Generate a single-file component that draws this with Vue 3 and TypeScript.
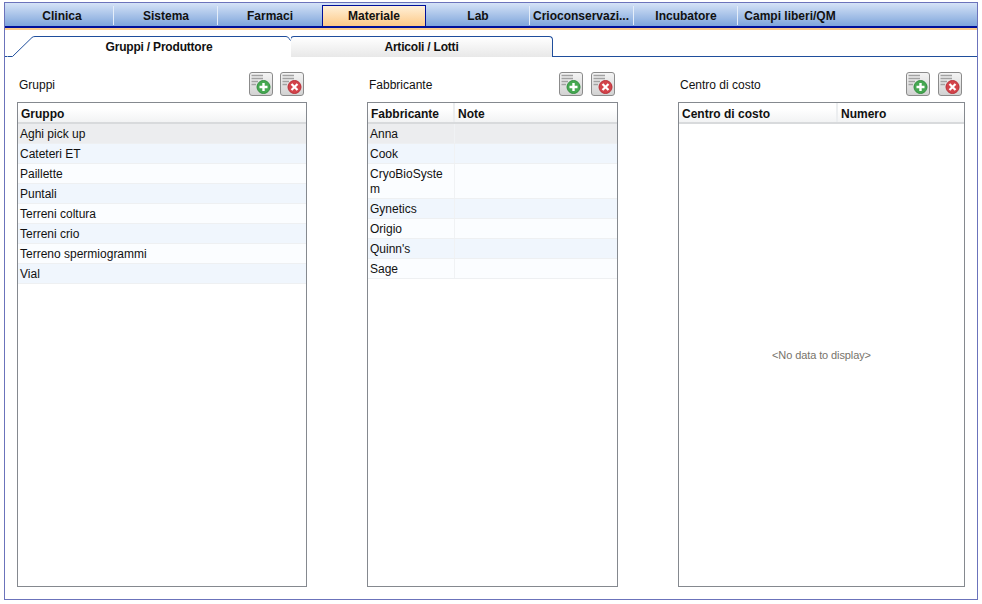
<template>
  <div class="frame">
    <nav class="main-tabs">
      <div
        v-for="tab in mainTabs"
        :key="tab"
        class="main-tab"
        :class="{ 'is-active': tab === 'Materiale', 'is-tight': tab === 'Crioconservazi...' }"
      >
        {{ tab }}
      </div>
    </nav>

    <div class="sub-tabs">
      <div class="sub-tab is-active">
        <svg class="sub-tab__shape" width="284" height="21" viewBox="0 0 284 21" aria-hidden="true">
          <path d="M0.5 20.5H5.5L25 1.5Q26 0.5 28 0.5H279Q281 0.5 282 2.5L283.5 4.5" fill="#fff" stroke="#1f4e9c" />
        </svg>
        <span>Gruppi / Produttore</span>
      </div>
      <div class="sub-tab"><span>Articoli / Lotti</span></div>
    </div>

    <div class="columns">
      <section v-for="col in columns" :key="col.title" class="column" :class="col.cls">
        <header class="column__head">
          <span class="column__title">{{ col.title }}</span>
          <div class="column__tools">
            <button class="tool" type="button">
              <svg width="22" height="22" viewBox="0 0 22 22" aria-hidden="true">
                <path d="M1.5 2.5H13M1.5 5.5H13M1.5 8.5H8M1.5 11.5H6" stroke="#a2a2a2" stroke-width="1.6" />
                <circle cx="13.5" cy="14" r="6.5" fill="#45a851" stroke="#338f40" />
                <path d="M9.5 14H17.5M13.5 10V18" stroke="#fff" stroke-width="2.4" />
              </svg>
            </button>
            <button class="tool" type="button">
              <svg width="22" height="22" viewBox="0 0 22 22" aria-hidden="true">
                <path d="M1.5 2.5H13M1.5 5.5H13M1.5 8.5H8M1.5 11.5H6" stroke="#a2a2a2" stroke-width="1.6" />
                <circle cx="13.5" cy="14" r="6.5" fill="#d3434a" stroke="#b92f38" />
                <path d="M10.5 11L16.5 17M16.5 11L10.5 17" stroke="#fff" stroke-width="2.2" />
              </svg>
            </button>
          </div>
        </header>

        <div class="grid">
          <div class="grid__row grid__row--head" :style="{ gridTemplateColumns: col.template }">
            <div v-for="h in col.headers" :key="h" class="grid__cell">{{ h }}</div>
          </div>
          <div
            v-for="(row, i) in col.rows"
            :key="row"
            class="grid__row"
            :class="{ 'is-selected': i === 0, 'is-alt': i % 2 === 1 }"
            :style="{ gridTemplateColumns: col.template }"
          >
            <div class="grid__cell">{{ row }}</div>
            <div v-if="col.headers.length > 1" class="grid__cell"></div>
          </div>
          <div v-if="!col.rows.length" class="grid__empty">&lt;No data to display&gt;</div>
        </div>
      </section>
    </div>
  </div>
</template>

<script setup lang="ts">
const mainTabs = [
  'Clinica',
  'Sistema',
  'Farmaci',
  'Materiale',
  'Lab',
  'Crioconservazi...',
  'Incubatore',
  'Campi liberi/QM',
];

const columns = [
  {
    title: 'Gruppi',
    cls: 'column--groups',
    headers: ['Gruppo'],
    template: '1fr',
    rows: [
      'Aghi pick up',
      'Cateteri ET',
      'Paillette',
      'Puntali',
      'Terreni coltura',
      'Terreni crio',
      'Terreno spermiogrammi',
      'Vial',
    ],
  },
  {
    title: 'Fabbricante',
    cls: 'column--makers',
    headers: ['Fabbricante', 'Note'],
    template: '87px 1fr',
    rows: ['Anna', 'Cook', 'CryoBioSystem', 'Gynetics', 'Origio', "Quinn's", 'Sage'],
  },
  {
    title: 'Centro di costo',
    cls: 'column--costs',
    headers: ['Centro di costo', 'Numero'],
    template: '159px 1fr',
    rows: [] as string[],
  },
];
</script>

<style>
html,
body {
  margin: 0;
  background: #fff;
}
</style>

<style scoped>
.frame {
  box-sizing: border-box;
  width: 974px;
  height: 598px;
  margin: 2px 0 0 4px;
  border: 1px solid #6b73bb;
  background: #fff;
  font-family: "Liberation Sans", Arial, sans-serif;
  font-size: 12px;
  color: #111;
  overflow: hidden;
}

.main-tabs {
  display: flex;
  box-sizing: border-box;
  height: 25px;
  padding: 2px 0 0 5px;
  background: linear-gradient(#d5e3f7, #7fa5db);
  border-bottom: 2px solid #00109a;
  box-shadow: 0 2px 0 #fdcb8a;
  margin-bottom: 2px;
}

.main-tab {
  box-sizing: border-box;
  flex: 0 0 104px;
  height: 20px;
  margin-top: 1px;
  display: flex;
  align-items: center;
  justify-content: center;
  font-weight: 700;
  line-height: 20px;
  white-space: nowrap;
  position: relative;
}

.main-tab:nth-child(-n+2)::after,
.main-tab:nth-child(n+5):nth-child(-n+7)::after {
  content: "";
  position: absolute;
  right: 0;
  top: 0;
  bottom: 1px;
  width: 1px;
  background: #e4edf9;
}

.main-tab.is-active {
  height: 21px;
  margin-top: 0;
  border: 1px solid #00109a;
  border-bottom: 0;
  background: linear-gradient(#fff0d8, #fdc987);
}

.main-tab.is-tight {
  justify-content: flex-start;
  padding-left: 3px;
}

.sub-tabs {
  display: flex;
  box-sizing: border-box;
  height: 27px;
  padding: 6px 0 0 2px;
  border-bottom: 1px solid #1f4e9c;
}

.sub-tab {
  box-sizing: border-box;
  position: relative;
  height: 21px;
  display: flex;
  align-items: center;
  justify-content: center;
  font-weight: 700;
  letter-spacing: -0.2px;
}

.sub-tab.is-active {
  width: 284px;
  background: #fff;
  z-index: 1;
}

.sub-tab.is-active span {
  position: relative;
  padding-left: 20px;
}

.sub-tab__shape {
  position: absolute;
  left: 0;
  top: 0;
}

.sub-tab:not(.is-active) {
  width: 263px;
  margin-left: -1px;
  border: 1px solid #1f4e9c;
  border-bottom: 0;
  border-radius: 4px 4px 0 0;
  background: linear-gradient(#fff, #e8e8e8);
}

.columns {
  display: grid;
  grid-template-columns: 290px 251px 287px;
  column-gap: 60px;
  padding: 15px 0 0 12px;
}

.column__head {
  display: flex;
  align-items: center;
  justify-content: space-between;
  height: 24px;
  margin-bottom: 6px;
}

.column__title {
  padding: 2px 0 0 2px;
}

.column__tools {
  display: flex;
  gap: 8px;
  padding-right: 3px;
}

.column--groups .column__tools {
  gap: 7px;
}

.tool {
  box-sizing: border-box;
  width: 24px;
  height: 24px;
  padding: 0;
  display: flex;
  align-items: center;
  justify-content: center;
  border: 1px solid #8b8b8b;
  border-radius: 3px;
  background: linear-gradient(#f4f4f4, #d2d2d2);
}

.grid {
  box-sizing: border-box;
  display: flex;
  flex-direction: column;
  height: 485px;
  border: 1px solid #85898f;
  background: #fff;
}

.grid__row {
  display: grid;
  box-sizing: border-box;
  min-height: 20px;
  border-bottom: 1px solid #eef0f2;
  background: #fbfdff;
  line-height: 15px;
}

.grid__row.is-alt {
  background: #f0f6fd;
}

.grid__row.is-selected {
  background: #ecedef;
}

.grid__row--head {
  flex: 0 0 21px;
  border-bottom: 2px solid #d8dadc;
  background: linear-gradient(#fff 30%, #f2f3f4);
  font-weight: 700;
}

.grid__row--head .grid__cell {
  padding: 4px 2px 0 3px;
}

.grid__cell {
  padding: 3px 2px 1px 2px;
  overflow-wrap: anywhere;
  border-right: 1px solid #f0f2f4;
}

.grid__cell:last-child {
  border-right: 0;
}

.grid__row--head .grid__cell:not(:last-child) {
  border-right: 2px solid #eceef0;
}

.grid__empty {
  flex: 1;
  display: flex;
  align-items: center;
  justify-content: center;
  font-size: 11px;
  letter-spacing: -0.1px;
  color: #77736b;
}
</style>
